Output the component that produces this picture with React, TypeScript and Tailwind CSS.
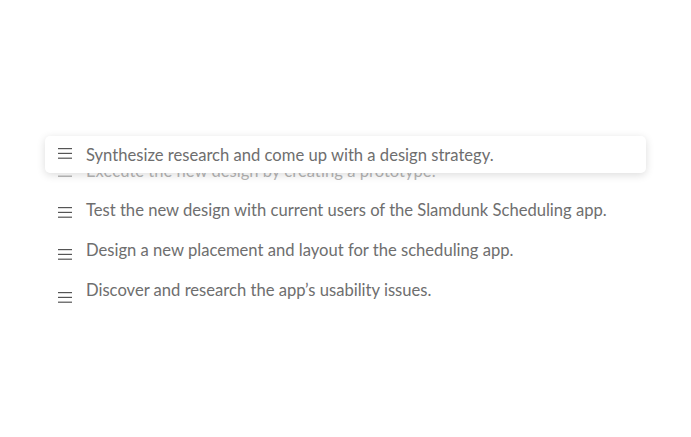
const tasks = [
  { id: 1, label: "Execute the new design by creating a prototype.", iconClass: "mt-[2px]", textClass: "mt-[3px]" },
  { id: 2, label: "Test the new design with current users of the Slamdunk Scheduling app.", iconClass: "mt-[5px]", textClass: "" },
  { id: 3, label: "Design a new placement and layout for the scheduling app.", iconClass: "mt-[9px]", textClass: "" },
  { id: 4, label: "Discover and research the app\u2019s usability issues.", iconClass: "mt-[15px]", textClass: "" },
];

function DragHandle({ className = "" }: { className?: string }) {
  return (
    <svg width="14" height="11" viewBox="0 0 14 11" className={`shrink-0 ${className}`}>
      <rect x="0" y="0" width="14" height="1.2" fill="#555" />
      <rect x="0" y="4.8" width="14" height="1.2" fill="#555" />
      <rect x="0" y="9.6" width="14" height="1.2" fill="#555" />
    </svg>
  );
}

export default function App() {
  return (
    <div
      className="relative w-full h-[437px] bg-white text-[#6e6e6e]"
      style={{ fontFamily: "Lato, 'Noto Sans', sans-serif" }}
    >
      <div className="pt-[150px] pl-[58px] pr-[45px] flex flex-col">
        {tasks.map((t, i) => (
          <div
            key={t.id}
            className={`h-[40px] flex items-center gap-[14px] ${i === 0 ? "opacity-50" : ""}`}
          >
            <DragHandle className={t.iconClass} />
            <span className={`text-[16.6px] leading-none ${t.textClass}`}>{t.label}</span>
          </div>
        ))}
      </div>

      {/* item being dragged */}
      <div className="absolute left-[45px] top-[136px] w-[601px] h-[37px] bg-white rounded-[5px] shadow-[0_2px_8px_rgba(0,0,0,0.14)] flex items-center pl-[13px] gap-[14px]">
        <DragHandle className="-mt-[2px]" />
        <span className="text-[16.6px] leading-none mt-[1px]">Synthesize research and come up with a design strategy.</span>
      </div>
    </div>
  );
}
